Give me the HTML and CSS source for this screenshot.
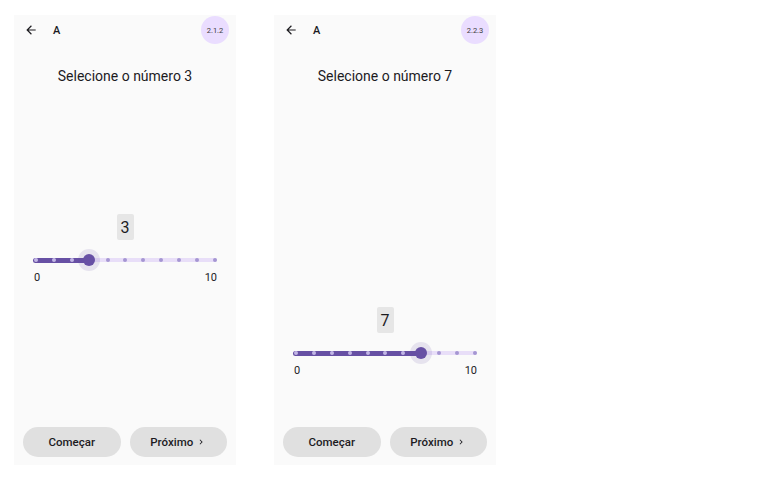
FILE: index.html
```html
<!DOCTYPE html>
<html lang="pt">
<head>
<meta charset="utf-8">
<title>Selecione o número</title>
<link rel="stylesheet" href="styles.css">
</head>
<body>
<div class="page">
  <section class="phone phone--first">
    <header class="topbar">
      <svg class="back" viewBox="0 0 24 24" width="14" height="14"><path d="M20 11H7.83l5.59-5.59L12 4l-8 8 8 8 1.41-1.41L7.83 13H20v-2z"/></svg>
      <span class="topbar-title">A</span>
      <span class="badge">2.1.2</span>
    </header>
    <h1 class="title">Selecione o número 3</h1>
    <div class="slider-block">
      <div class="value-label">3</div>
      <div class="slider">
        <div class="track-inactive"></div>
        <div class="track-active" style="width:58px"></div>
        <div class="ticks">
          <span class="tick tick--on"></span><span class="tick tick--on"></span><span class="tick tick--on"></span><span class="tick tick--on"></span>
          <span class="tick"></span><span class="tick"></span><span class="tick"></span><span class="tick"></span><span class="tick"></span><span class="tick"></span><span class="tick"></span>
        </div>
        <div class="thumb" style="left:56px"></div>
      </div>
      <div class="range-labels"><span>0</span><span>10</span></div>
    </div>
    <footer class="actions">
      <button class="btn">Começar</button>
      <button class="btn">Próximo <svg class="chev" viewBox="0 0 24 24" width="10" height="10"><path d="M10 6L8.59 7.41 13.17 12l-4.58 4.59L10 18l6-6z"/></svg></button>
    </footer>
  </section>

  <section class="phone phone--second">
    <header class="topbar">
      <svg class="back" viewBox="0 0 24 24" width="14" height="14"><path d="M20 11H7.83l5.59-5.59L12 4l-8 8 8 8 1.41-1.41L7.83 13H20v-2z"/></svg>
      <span class="topbar-title">A</span>
      <span class="badge">2.2.3</span>
    </header>
    <h1 class="title">Selecione o número 7</h1>
    <div class="slider-block">
      <div class="value-label">7</div>
      <div class="slider">
        <div class="track-inactive"></div>
        <div class="track-active" style="width:130px"></div>
        <div class="ticks">
          <span class="tick tick--on"></span><span class="tick tick--on"></span><span class="tick tick--on"></span><span class="tick tick--on"></span><span class="tick tick--on"></span><span class="tick tick--on"></span><span class="tick tick--on"></span><span class="tick tick--on"></span>
          <span class="tick"></span><span class="tick"></span><span class="tick"></span>
        </div>
        <div class="thumb" style="left:128px"></div>
      </div>
      <div class="range-labels"><span>0</span><span>10</span></div>
    </div>
    <footer class="actions">
      <button class="btn">Começar</button>
      <button class="btn">Próximo <svg class="chev" viewBox="0 0 24 24" width="10" height="10"><path d="M10 6L8.59 7.41 13.17 12l-4.58 4.59L10 18l6-6z"/></svg></button>
    </footer>
  </section>
</div>
</body>
</html>
```

FILE: styles.css
```css
* { box-sizing: border-box; }

html, body {
  margin: 0;
  padding: 0;
  background: #ffffff;
  font-family: Roboto, "Noto Sans", "Liberation Sans", sans-serif;
  color: #1c1b1f;
}

.page {
  display: flex;
  gap: 38px;
  padding: 15px 0 0 14px;
}

.phone {
  width: 222px;
  height: 450px;
  background: #fafafa;
  display: flex;
  flex-direction: column;
}

.topbar {
  display: flex;
  align-items: center;
  height: 28px;
  margin-top: 1px;
  padding: 0 7px 0 10px;
}

.back {
  fill: #1c1b1f;
  flex: none;
}

.topbar-title {
  margin-left: 15px;
  font-size: 11px;
  font-weight: 500;
}

.badge {
  margin-left: auto;
  width: 28px;
  height: 28px;
  border-radius: 50%;
  background: #eaddff;
  display: flex;
  align-items: center;
  justify-content: center;
  font-size: 7.5px;
  color: #3a3a3a;
}

.title {
  margin: 22px 0 0;
  font-size: 14px;
  line-height: 20px;
  font-weight: 400;
  text-align: center;
  color: #1c1b1f;
}

.slider-block {
  display: flex;
  flex-direction: column;
  align-items: center;
  padding: 0 19px;
}

.phone--first .slider-block { margin-top: 128px; }
.phone--second .slider-block { margin-top: 221px; }

.value-label {
  width: 17px;
  height: 26px;
  border-radius: 2px;
  background: #e6e6e6;
  display: flex;
  align-items: center;
  justify-content: center;
  font-size: 16px;
  color: #1c1b1f;
}

.slider {
  position: relative;
  width: 184px;
  height: 20px;
  margin-top: 10px;
}

.track-inactive {
  position: absolute;
  left: 0;
  right: 0;
  top: 8px;
  height: 4px;
  border-radius: 2px;
  background: #e8def8;
}

.track-active {
  position: absolute;
  left: 0;
  top: 7.5px;
  height: 5px;
  border-radius: 3px 0 0 3px;
  background: #6750a4;
}

.ticks {
  position: absolute;
  left: 0;
  right: 0;
  top: 8px;
  display: flex;
  justify-content: space-between;
  padding: 0 0 0 1px;
}

.tick {
  width: 4px;
  height: 4px;
  border-radius: 50%;
  background: #a596d2;
}

.tick--on {
  background: #c2b6e6;
}

.thumb {
  position: absolute;
  top: 10px;
  width: 12px;
  height: 12px;
  margin: -6px 0 0 -6px;
  border-radius: 50%;
  background: #6750a4;
  box-shadow: 0 0 0 5px rgba(103, 80, 164, 0.13);
}

.range-labels {
  width: 184px;
  display: flex;
  justify-content: space-between;
  padding: 1px 0 0 1px;
  font-size: 11px;
  line-height: 14px;
  color: #1c1b1f;
}

.actions {
  margin-top: auto;
  display: flex;
  gap: 9px;
  padding: 0 9px 8px;
}

.btn {
  flex: 1;
  height: 30px;
  border: none;
  border-radius: 15px;
  background: #e0e0e0;
  font-family: Roboto, "Noto Sans", "Liberation Sans", sans-serif;
  font-size: 11.5px;
  font-weight: 500;
  color: #1c1b1f;
  display: flex;
  align-items: center;
  justify-content: center;
  gap: 3px;
  padding: 0;
}

.chev {
  fill: #1c1b1f;
}
```
